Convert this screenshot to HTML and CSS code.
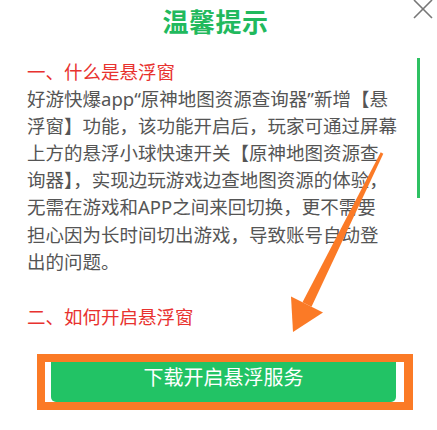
FILE: index.html
```html
<!DOCTYPE html>
<html lang="zh-CN">
<head>
<meta charset="utf-8">
<link rel="stylesheet" href="styles.css">
</head>
<body>
<div class="dialog">
  <header class="head">
    <h1 class="title">温馨提示</h1>
    <button class="close" aria-label="关闭">
      <svg viewBox="0 0 20 20" width="20" height="20"><path d="M1 1L19 19M19 1L1 19" stroke="#777" stroke-width="1.6" fill="none"/></svg>
    </button>
  </header>
  <div class="body">
    <h2 class="sec">一、什么是悬浮窗</h2>
    <p class="txt">好游快爆app“原神地图资源查询器”新增【悬<br>浮窗】功能，该功能开启后，玩家可通过屏幕<br>上方的悬浮小球快速开关【原神地图资源查<br>询器】，实现边玩游戏边查地图资源的体验，<br>无需在游戏和APP之间来回切换，更不需要<br>担心因为长时间切出游戏，导致账号自动登<br>出的问题。</p>
    <h2 class="sec sec2">二、如何开启悬浮窗</h2>
  </div>
  <div class="action">
    <div class="frame">
      <div class="btn">下载开启悬浮服务</div>
    </div>
  </div>
  <div class="scrollbar"></div>
  <svg class="arrow" viewBox="0 0 437 430" width="437" height="430">
    <polygon points="380.7,152.3 383.3,153.7 311.5,306.7 302.5,302.3" fill="#fb7a26"/>
    <polygon points="291,296.5 323,312.5 293,332" fill="#fb7a26"/>
  </svg>
</div>
</body>
</html>
```
FILE: styles.css
```css
html, body {
  margin: 0;
  padding: 0;
  background: #fff;
}
.dialog {
  position: relative;
  width: 437px;
  height: 430px;
  overflow: hidden;
  font-family: "Noto Sans", "Noto Sans CJK SC", sans-serif;
}
.head {
  padding-top: 4px;
  padding-right: 6px;
}
.title {
  margin: 0;
  text-align: center;
  font-size: 26px;
  line-height: 36px;
  font-weight: 700;
  color: #21b95d;
  letter-spacing: 0.5px;
}
.close {
  position: absolute;
  left: 413px;
  top: -1px;
  width: 20px;
  height: 20px;
  padding: 0;
  border: 0;
  background: none;
}
.close svg { display: block; }
.body {
  padding-left: 27px;
  padding-top: 18.5px;
}
.sec {
  margin: 0;
  font-size: 18.5px;
  line-height: 26px;
  font-weight: 400;
  color: #e8322f;
}
.sec2 {
  margin-top: 29px;
}
.txt {
  margin: 0;
  font-size: 18.5px;
  line-height: 27.2px;
  color: #555;
  white-space: nowrap;
}
.action {
  padding-top: 24.5px;
  padding-left: 37px;
}
.frame {
  width: 345px;
  height: 40px;
  border-style: solid;
  border-color: #fb7a26;
  border-width: 8px 9px 8px 8px;
  background: #fff;
  padding: 0 8px 0 6px;
}
.btn {
  height: 40px;
  box-sizing: border-box;
  padding-bottom: 8px;
  line-height: 32px;
  background: #22c365;
  border-radius: 0 0 5px 5px;
  color: #fff;
  font-size: 20px;
  text-align: center;
}
.scrollbar {
  position: absolute;
  left: 417px;
  top: 58px;
  width: 2.5px;
  height: 140px;
  background: #2ec163;
}
.arrow {
  position: absolute;
  left: 0;
  top: 0;
  pointer-events: none;
}
```
